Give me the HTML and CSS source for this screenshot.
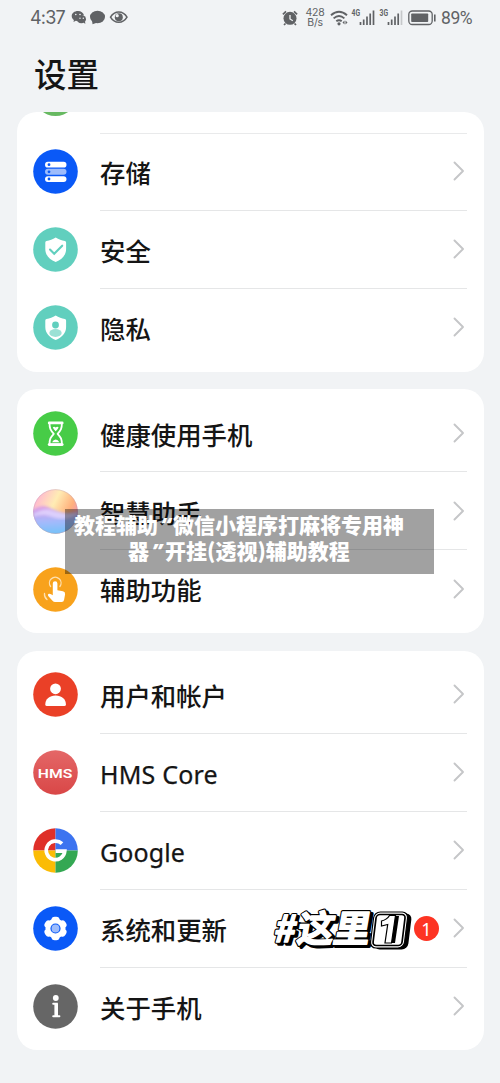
FILE: index.html
```html
<!DOCTYPE html>
<html lang="zh-CN">
<head>
<meta charset="utf-8">
<title>设置</title>
<link rel="stylesheet" href="styles.css">
</head>
<body>
<div class="screen">
  <header class="status">
    <span class="clock">4:37</span>
    <svg class="notices" width="60" height="16" viewBox="0 0 60 16">
      <path fill="#606265" d="M7 1C3.300 1 .7 3.200.7 6c0 1.600.9 3 2.200 3.900L2.500 12l2.300-1.200 1.300.2C5.900 7.500 8.700 5.300 13 5.300 12.300 2.800 10 1 7 1z"/>
      <ellipse cx="10.300" cy="9.200" rx="4.700" ry="4.100" fill="#606265"/><path fill="#606265" d="M12 12l2.300 2-.3-3z"/>
      <g fill="#f1f3f5"><circle cx="4.800" cy="4.500" r=".8"/><circle cx="9" cy="4.500" r=".8"/><circle cx="9" cy="8.300" r=".7"/><circle cx="12.300" cy="8.300" r=".7"/></g>
      <ellipse cx="26.500" cy="7" rx="7.500" ry="6.200" fill="#606265"/><path fill="#606265" d="M21 10l.5 4.300 5-1.800z"/>
      <path d="M39.500 7.200C43.500.3 52 .3 56 7.200 52 14 43.500 14 39.500 7.200z" fill="none" stroke="#606265" stroke-width="1.500"/>
      <circle cx="47.800" cy="7.200" r="4" fill="#606265"/><circle cx="46.200" cy="5.700" r="1.600" fill="#f1f3f5"/>
    </svg>
    <span class="spring"></span>
    <svg class="alarm" width="16" height="16" viewBox="0 0 16 16">
      <circle cx="8" cy="8.300" r="6.500" fill="#606265"/><path d="M.9 4.400L4 1.300M12 1.300l3.100 3.100M3.500 13.500L2 15M12.500 13.500L14 15" stroke="#606265" stroke-width="1.700"/>
      <path d="M8 5v4l2.800 1.700" fill="none" stroke="#f1f3f5" stroke-width="1.300"/>
    </svg>
    <span class="rate"><span>428</span><span>B/s</span></span>
    <svg class="radio" width="74" height="20" viewBox="0 0 74 20">
      <g fill="none" stroke="#606265" stroke-width="1.900"><path d="M1 7.200Q9 .2 17 7.200M3.600 10.400Q9 5.500 14.400 10.400M6.300 13.300Q9 11 11.700 13.300"/></g>
      <circle cx="9" cy="15.800" r="1.600" fill="#606265"/><path fill="#606265" d="M14.500 12.500v4l-2-2zM15.500 12.500v4l2-2z"/>
      <g class="net"><text x="21.500" y="8" textLength="8.500" lengthAdjust="spacingAndGlyphs">4G</text><text x="49.500" y="8" textLength="8.500" lengthAdjust="spacingAndGlyphs">3G</text></g>
      <g stroke="#606265" stroke-width="1.700"><path d="M30.500 14v3M33.700 11.500V17M37 8.500V17M40.200 5.500V17M43.500 2.500V17M58.500 14v3M61.700 11.500V17M65 8.500V17M68.200 5.500V17"/><path d="M71.500 2.500V17" stroke="#c6c8ca"/></g>
    </svg>
    <svg class="battery" width="28" height="16" viewBox="0 0 28 16">
      <rect x=".8" y="1" width="23.400" height="13.500" rx="3.500" fill="none" stroke="#606265" stroke-width="1.300"/><rect x="3.200" y="3.500" width="17" height="8.500" rx=".8" fill="#606265"/><path d="M26.800 4.500v7" stroke="#606265" stroke-width="1.600"/>
    </svg>
    <span class="percent">89%</span>
  </header>
  <h1 class="title">设置</h1>

  <main class="groups">
    <section class="card card-cut">
      <svg class="peek" width="45" height="22" viewBox="0 0 45 22"><circle cx="22.500" cy="-18" r="22.300" fill="#67b961"/></svg>
      <div class="row">
        <svg class="icon" viewBox="0 0 45 45"><circle cx="22.500" cy="22.500" r="22.300" fill="#0a59f7"/><rect x="12" y="12.800" width="21.500" height="5.800" rx="2.900" fill="#fff"/><rect x="12" y="19.800" width="21.500" height="6" rx="3" fill="#9dbcfc"/><rect x="12" y="27.200" width="21.500" height="5.800" rx="2.900" fill="#fff"/><g fill="#0a59f7"><circle cx="16" cy="15.700" r="1.400"/><circle cx="16" cy="22.800" r="1.400"/><circle cx="16" cy="30" r="1.400"/></g></svg>
        <div class="line"><span class="label">存储</span><svg class="chev" viewBox="0 0 12 20"><path d="M1.500 1.500L10 10l-8.500 8.500"/></svg></div>
      </div>
      <div class="row">
        <svg class="icon" viewBox="0 0 45 45"><circle cx="22.500" cy="22.500" r="22.300" fill="#61cfbe"/><path fill="#fff" d="M22.700 10.500c3 2 6 3 9.200 3.500q1.200.3 1.200 1.600V22c0 6-4 10.500-10.400 13C16.300 32.500 12.300 28 12.300 22v-6.400q0-1.300 1.200-1.600c3.200-.5 6.200-1.500 9.200-3.500z"/><path d="M17 22.500l4.200 4.200 8-8" fill="none" stroke="#61cfbe" stroke-width="2.100" stroke-linecap="round"/></svg>
        <div class="line"><span class="label">安全</span><svg class="chev" viewBox="0 0 12 20"><path d="M1.500 1.500L10 10l-8.500 8.500"/></svg></div>
      </div>
      <div class="row">
        <svg class="icon" viewBox="0 0 45 45"><circle cx="22.500" cy="22.500" r="22.300" fill="#61cfbe"/><path fill="#fff" d="M22.700 10.500c3 2 6 3 9.200 3.500q1.200.3 1.200 1.600V22c0 6-4 10.500-10.400 13C16.300 32.500 12.300 28 12.300 22v-6.400q0-1.300 1.200-1.600c3.200-.5 6.200-1.500 9.200-3.500z"/><circle cx="22.500" cy="20" r="3.400" fill="#61cfbe"/><ellipse cx="22.500" cy="28" rx="6.200" ry="3.900" fill="#9be1d5"/></svg>
        <div class="line last"><span class="label">隐私</span><svg class="chev" viewBox="0 0 12 20"><path d="M1.500 1.500L10 10l-8.500 8.500"/></svg></div>
      </div>
    </section>

    <section class="card">
      <div class="row">
        <svg class="icon" viewBox="0 0 45 45"><circle cx="22.500" cy="22.500" r="22.300" fill="#47cc47"/><g fill="none" stroke="#fff" stroke-width="1.800" stroke-linejoin="round"><rect x="14.800" y="10.500" width="15.800" height="2.800" rx="1.400" fill="#fff" stroke="none"/><rect x="14.800" y="32.200" width="15.800" height="2.800" rx="1.400" fill="#fff" stroke="none"/><path d="M16.500 12c0 5.500 1 7.200 4.300 10.800C17.500 26.500 16.500 28 16.500 33.500h12.400c0-5.500-1-7-4.300-10.700 3.300-3.600 4.300-5.300 4.300-10.800z"/></g><path fill="#fff" d="M19.800 16.200q1.500-.8 2.900.2 1.400-1 2.900-.2-.7 2.300-2.900 4.100-2.200-1.800-2.900-4.100zM19 31.200q1.500-2.600 3.700-2.600t3.700 2.600z"/></svg>
        <div class="line"><span class="label">健康使用手机</span><svg class="chev" viewBox="0 0 12 20"><path d="M1.500 1.500L10 10l-8.500 8.500"/></svg></div>
      </div>
      <div class="row">
        <svg class="icon" viewBox="0 0 45 45">
          <defs><linearGradient id="warm" x1="0" y1=".2" x2="1" y2=".7"><stop offset="0" stop-color="#ffb0d4"/><stop offset=".42" stop-color="#ffecb4"/><stop offset=".75" stop-color="#ffb17c"/><stop offset="1" stop-color="#ee8fc4"/></linearGradient><linearGradient id="cool" x1=".2" y1="0" x2=".3" y2="1"><stop offset="0" stop-color="#e09ae6"/><stop offset=".45" stop-color="#a6b9fb"/><stop offset="1" stop-color="#59c8f7"/></linearGradient><clipPath id="orb"><circle cx="22.500" cy="22.500" r="22.300"/></clipPath><filter id="melt"><feGaussianBlur stdDeviation="1.600"/></filter></defs>
          <g clip-path="url(#orb)"><rect width="45" height="45" fill="url(#warm)"/><path filter="url(#melt)" fill="url(#cool)" d="M-5 24C4 18 9 15 17 19s17 9 33 3v30H-5z"/><path filter="url(#melt)" fill="#e6dcff" opacity=".75" d="M-1 26C6 22 11 19 18 21s16 6 29 2c-8 8-20 8-28 5S5 26-1 28z"/></g><circle cx="22.500" cy="22.500" r="21.900" fill="none" stroke="#b999bd" stroke-width=".6" opacity=".6"/>
        </svg>
        <div class="line"><span class="label">智慧助手</span><svg class="chev" viewBox="0 0 12 20"><path d="M1.500 1.500L10 10l-8.500 8.500"/></svg></div>
      </div>
      <div class="row">
        <svg class="icon" viewBox="0 0 45 45"><circle cx="22.500" cy="22.500" r="22.300" fill="#f8a21c"/><path fill="#fff" d="M19.800 16.500a2.300 2.300 0 0 1 4.600 0v6.700l5.500 1.100q2.500.6 2.200 3l-1 5.500q-.3 2.200-2.500 2.200h-6.500q-1.500 0-2.600-1.200l-4.300-4.800q-1-1.600.7-2.200 1.700-.4 3.900 1.500z"/><path d="M17.600 19.500A5.800 5.800 0 1 1 26.900 19.500M11.500 26.500q-.5 3.500 2.500 6" fill="none" stroke="#fde0b1" stroke-width="1.300" stroke-linecap="round"/></svg>
        <div class="line last"><span class="label">辅助功能</span><svg class="chev" viewBox="0 0 12 20"><path d="M1.500 1.500L10 10l-8.500 8.500"/></svg></div>
      </div>
    </section>

    <section class="card">
      <div class="row">
        <svg class="icon" viewBox="0 0 45 45"><circle cx="22.500" cy="22.500" r="22.300" fill="#ea4027"/><circle cx="22.500" cy="16.800" r="5.400" fill="#fff"/><path fill="#fff" d="M12.300 32.500c0-5.500 4.200-9 10.300-9s10.300 3.500 10.300 9q0 1.500-1.500 1.500H13.800q-1.500 0-1.500-1.500z"/></svg>
        <div class="line"><span class="label">用户和帐户</span><svg class="chev" viewBox="0 0 12 20"><path d="M1.500 1.500L10 10l-8.500 8.500"/></svg></div>
      </div>
      <div class="row">
        <svg class="icon" viewBox="0 0 45 45"><defs><linearGradient id="rose" x2="0" y2="1"><stop stop-color="#e46767"/><stop offset="1" stop-color="#d94747"/></linearGradient></defs><circle cx="22.500" cy="22.500" r="22.300" fill="url(#rose)"/><text class="hms" x="4.800" y="27.600" textLength="34.500" lengthAdjust="spacingAndGlyphs">HMS</text></svg>
        <div class="line"><span class="label latin core">HMS Core</span><svg class="chev" viewBox="0 0 12 20"><path d="M1.500 1.500L10 10l-8.500 8.500"/></svg></div>
      </div>
      <div class="row">
        <svg class="icon" viewBox="0 0 45 45"><path fill="#df3029" d="M22.500 22.500V.2A22.300 22.300 0 0 0 .2 22.500z"/><path fill="#3c73f0" d="M22.500 22.500V.2a22.300 22.300 0 0 1 22.300 22.300z"/><path fill="#fbbc05" d="M22.500 22.500H.2a22.300 22.300 0 0 0 22.300 22.300z"/><path fill="#34a853" d="M22.500 22.500h22.300a22.300 22.300 0 0 1-22.300 22.300z"/><path d="M29 15.700A9.300 9.300 0 1 0 31.800 23.200H22.700" fill="none" stroke="#fff" stroke-width="3.700"/></svg>
        <div class="line"><span class="label latin goog">Google</span><svg class="chev" viewBox="0 0 12 20"><path d="M1.500 1.500L10 10l-8.500 8.500"/></svg></div>
      </div>
      <div class="row">
        <svg class="icon" viewBox="0 0 45 45"><circle cx="22.500" cy="22.500" r="22.300" fill="#0a59f7"/><g fill="#fff"><circle cx="22.500" cy="22.500" r="10"/><rect x="18.500" y="10.700" width="8" height="23.600" rx="3.200"/><rect x="18.500" y="10.700" width="8" height="23.600" rx="3.200" transform="rotate(60 22.500 22.500)"/><rect x="18.500" y="10.700" width="8" height="23.600" rx="3.200" transform="rotate(120 22.500 22.500)"/></g><circle cx="22.500" cy="22.500" r="4.500" fill="#9dbcfc" stroke="#0a59f7" stroke-width="1.200"/></svg>
        <div class="line"><span class="label">系统和更新</span>
          <svg class="sticker" width="142" height="44" viewBox="0 0 142 44">
            <defs><g id="tag" class="tag"><text transform="skewX(-10)"><tspan x="8" y="36">#</tspan><tspan x="31" y="36">这里</tspan></text></g></defs>
            <use href="#tag" class="shade" x="2.500" y="1.500"/><use href="#tag" class="edge"/><use href="#tag" class="face"/>
            <rect x="105" y="7.500" width="34" height="36" rx="6" transform="translate(3 0) skewX(-7)" fill="#000"/>
            <rect x="102" y="6" width="34" height="36" rx="6" transform="translate(2 0) skewX(-7)" fill="#fff" stroke="#000" stroke-width="1.200"/>
            <rect x="104.500" y="8.500" width="29" height="31" rx="3.500" transform="translate(2 0) skewX(-7)" fill="#fff" stroke="#000" stroke-width="1.700"/>
            <path d="M123 10h5l-4 27h-6z" fill="#000"/><path d="M110.500 15c4-1 6-2 8-5.500h6L120.500 37h-6.500l2.700-18.500-6.200 1.500z" fill="#fff" stroke="#000" stroke-width="1.200"/>
          </svg>
          <span class="badge">1</span><svg class="chev" viewBox="0 0 12 20"><path d="M1.500 1.500L10 10l-8.500 8.500"/></svg></div>
      </div>
      <div class="row">
        <svg class="icon" viewBox="0 0 45 45"><circle cx="22.500" cy="22.500" r="22.300" fill="#666"/><circle cx="22.800" cy="14" r="2.900" fill="#fff"/><path d="M20.200 19.800h3.600v12.400M20.200 32.300h6.200" fill="none" stroke="#fff" stroke-width="2" stroke-linecap="round"/><path d="M23.200 19.500v13" stroke="#fff" stroke-width="3.600"/></svg>
        <div class="line last"><span class="label">关于手机</span><svg class="chev" viewBox="0 0 12 20"><path d="M1.500 1.500L10 10l-8.500 8.500"/></svg></div>
      </div>
    </section>
  </main>
  <div class="caption"><div>教程辅助<span class="quote open">“</span>微信小程序打麻将专用神</div><div>器<span class="quote close">”</span>开挂(透视)辅助教程</div></div>
</div>
</body>
</html>
```
FILE: styles.css
```css
* { box-sizing: border-box; }
body { margin: 0; background: #f1f3f5; font-family: "Noto Sans CJK SC", sans-serif; color: #151515; }
svg { display: block; flex: none; }
.screen { position: relative; width: 500px; height: 1083px; overflow: hidden; }
.status { display: flex; align-items: center; height: 36px; padding: 0 27px 0 30px; color: #606265; }
.clock { width: 41px; font: 18px/20px Inter, sans-serif; letter-spacing: -.8px; white-space: nowrap; }
.spring { flex: 1; }
.alarm { margin-right: 7px; }
.rate { display: flex; flex-direction: column; align-items: center; width: 20px; margin-right: 5px; font: 10.500px/10px Inter, sans-serif; letter-spacing: -.3px; }
.radio { margin-right: 4px; }
.net { font: bold 9px Roboto, sans-serif; fill: #606265; }
.battery { margin-right: 5px; }
.percent { width: 32px; font: 17.500px/20px Roboto, sans-serif; letter-spacing: -.4px; }
.title { height: 76px; margin: 0; padding-left: 34px; font-size: 32.500px; font-weight: 500; line-height: 73px; }
.groups { display: flex; flex-direction: column; gap: 17px; padding: 0 16.500px 0 17px; }
.card { padding: 5.500px 16.500px 5px 16px; border-radius: 20px; background: #fff; height: 244px; }
.card:last-child { height: 399.500px; margin-top: .5px; }
.card-cut { height: 260px; padding-top: 0; }
.peek { height: 21px; }
.card-cut .peek + .row { position: relative; }
.card-cut .peek + .row::before { content: ""; position: absolute; top: 0; left: 67px; right: 0; height: 1px; background: #e9eaeb; }
.row { display: flex; align-items: center; height: 77.900px; }
.icon { width: 45px; height: 45px; }
.line { display: flex; flex: 1; align-items: center; height: 100%; margin-left: 22px; border-bottom: 1px solid #e5e6e7; }
.line.last { border-bottom-color: transparent; }
.label { flex: 1; padding-top: 1.500px; font-size: 25.400px; font-weight: 500; line-height: 36px; white-space: nowrap; }
.latin { padding-top: 3px; font-family: "Noto Sans", sans-serif; font-size: 25px; font-weight: 400; -webkit-text-stroke: .25px #151515; }
.chev { width: 12px; height: 20px; margin-right: 2px; }
.chev path { fill: none; stroke: #c5c6c8; stroke-width: 1.900; stroke-linecap: round; stroke-linejoin: round; }
.core { letter-spacing: .2px; }
.goog { letter-spacing: .1px; }
.hms { font: 600 13.500px Roboto, sans-serif; fill: #fff; }
.sticker { margin-right: 1px; overflow: visible; }
.tag { font-size: 37px; font-weight: 700; letter-spacing: -1px; }
.shade { fill: #000; stroke: #000; stroke-width: 3.600; stroke-linejoin: round; }
.edge { fill: #000; stroke: #000; stroke-width: 3.600; stroke-linejoin: round; }
.face { fill: #fff; stroke: #fff; stroke-width: 1.400; stroke-linejoin: round; }
.badge { width: 25px; height: 25px; margin-right: 14px; border-radius: 50%; background: #fd3423; color: #fff; font: 18px/26px "Noto Sans", sans-serif; text-align: center; }
.caption { position: absolute; left: 65px; top: 509px; width: 369px; height: 65px; padding: 2px 0 0 9px; background: rgba(0, 0, 0, .37); color: #fff; font-size: 21px; font-weight: 900; line-height: 26px; white-space: nowrap; }
.caption div:last-child { padding-left: 54px; }
.quote { display: inline-block; width: 15px; font-family: "Open Sans", sans-serif; font-style: italic; line-height: 20px; text-align: center; }
.close { width: 16px; }
```
